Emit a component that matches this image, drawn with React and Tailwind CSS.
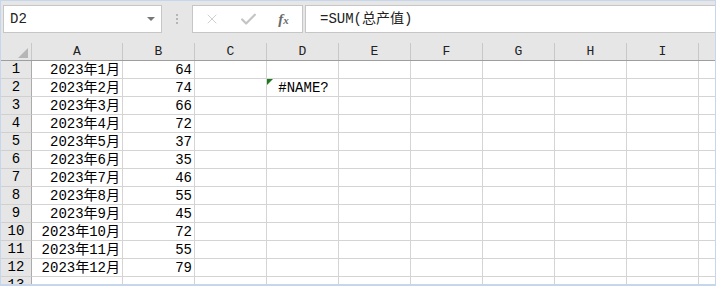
import React from 'react';
import { X, Check } from 'lucide-react';

const months = [
    ['2023年1月', 64],
    ['2023年2月', 74],
    ['2023年3月', 66],
    ['2023年4月', 72],
    ['2023年5月', 37],
    ['2023年6月', 35],
    ['2023年7月', 46],
    ['2023年8月', 55],
    ['2023年9月', 45],
    ['2023年10月', 72],
    ['2023年11月', 55],
    ['2023年12月', 79],
];

const wideCols = ['C', 'D', 'E', 'F', 'G', 'H', 'I'];

const font = { fontFamily: '"Liberation Mono", "Noto Sans CJK SC", monospace' };

function Row({ num, a, b, d, error }) {
    return (
        <div className="flex h-[18px] shrink-0">
            <div className="w-[31px] shrink-0 bg-[#e6e6e6] border-r border-[#ababab] border-b border-b-[#d0d0d0] flex items-center justify-center text-[14px] leading-[17px] text-black">
                {num}
            </div>
            <div className="w-[91px] shrink-0 bg-white border-r border-b border-[#d4d4d4] text-right pr-[2px] text-[14px] leading-[18px] text-black whitespace-nowrap">
                {a}
            </div>
            <div className="w-[72px] shrink-0 bg-white border-r border-b border-[#d4d4d4] text-right pr-[2px] text-[14px] leading-[18px] text-black">
                {b}
            </div>
            {wideCols.map((c) => (
                <div
                    key={c}
                    className="relative w-[72px] shrink-0 bg-white border-r border-b border-[#d4d4d4] text-center text-[14px] leading-[18px] text-black"
                >
                    {c === 'D' && error && (
                        <>
                            <svg className="absolute left-0 top-0" width="6" height="6" viewBox="0 0 6 6">
                                <polygon points="0,0 6,0 0,6" fill="#1d7a1d" />
                            </svg>
                            <span className="pl-[2px]">{d}</span>
                        </>
                    )}
                </div>
            ))}
            <div className="flex-1 bg-white border-b border-[#d4d4d4]" />
        </div>
    );
}

export default function App() {
    return (
        <div
            className="w-[716px] h-[286px] border-t border-x border-b-2 border-[#c6d6ec] bg-[#e6e6e6] overflow-hidden flex flex-col"
            style={font}
        >
            {/* Formula bar */}
            <div className="h-[42px] shrink-0 flex items-start pt-[4px] pl-[2px]">
                <div className="w-[159px] h-[28px] shrink-0 bg-white border border-[#c6c6c6] flex items-center justify-between pl-[6px] pr-[6px]">
                    <span className="text-[14px] text-[#222]">D2</span>
                    <svg width="8" height="5" viewBox="0 0 8 5">
                        <polygon points="0,0 8,0 4,4" fill="#777" />
                    </svg>
                </div>
                <div className="w-[30px] h-[28px] shrink-0 flex flex-col items-center justify-center gap-[2px]">
                    <span className="w-[2px] h-[2px] bg-[#b5b5b5]" />
                    <span className="w-[2px] h-[2px] bg-[#b5b5b5]" />
                    <span className="w-[2px] h-[2px] bg-[#b5b5b5]" />
                </div>
                <div className="w-[111px] h-[28px] shrink-0 bg-white border border-[#c6c6c6] flex items-center">
                    <div className="w-[36px] flex justify-center pl-[2px]">
                        <X size={16} strokeWidth={1.2} color="#c4c4c4" />
                    </div>
                    <div className="w-[38px] flex justify-center">
                        <Check size={19} strokeWidth={2.8} color="#c4c4c4" />
                    </div>
                    <div className="flex-1 flex justify-center pr-[2px]">
                        <span
                            className="italic text-[15px] text-[#6a6a6a] font-bold"
                            style={{ fontFamily: '"Liberation Serif", serif' }}
                        >
                            f<span className="text-[11px]">x</span>
                        </span>
                    </div>
                </div>
                <div className="flex-1 ml-[2px] h-[28px] bg-white border-y border-l border-[#c6c6c6] flex items-center pl-[14px]">
                    <span className="text-[14px] text-[#222]">=SUM(总产值)</span>
                </div>
            </div>

            {/* Column headers */}
            <div className="flex h-[18px] shrink-0 border-b border-[#9e9e9e] bg-[#e6e6e6]">
                <div className="w-[31px] shrink-0 border-r border-[#c8c8c8] flex items-end justify-end pr-[3px] pb-[2px]">
                    <svg width="10" height="10" viewBox="0 0 10 10">
                        <polygon points="10,0 10,10 0,10" fill="#b6b6b6" />
                    </svg>
                </div>
                <div className="w-[91px] shrink-0 border-r border-[#c8c8c8] text-center text-[13px] leading-[18px] text-[#222]">
                    A
                </div>
                <div className="w-[72px] shrink-0 border-r border-[#c8c8c8] text-center text-[13px] leading-[18px] text-[#222]">
                    B
                </div>
                {wideCols.map((c) => (
                    <div
                        key={c}
                        className="w-[72px] shrink-0 border-r border-[#c8c8c8] text-center text-[13px] leading-[18px] text-[#222]"
                    >
                        {c}
                    </div>
                ))}
                <div className="flex-1" />
            </div>

            {/* Rows */}
            {months.map(([a, b], i) => (
                <Row key={a} num={i + 1} a={a} b={b} d="#NAME?" error={i === 1} />
            ))}
            <Row num={13} a="" b="" />
        </div>
    );
}
